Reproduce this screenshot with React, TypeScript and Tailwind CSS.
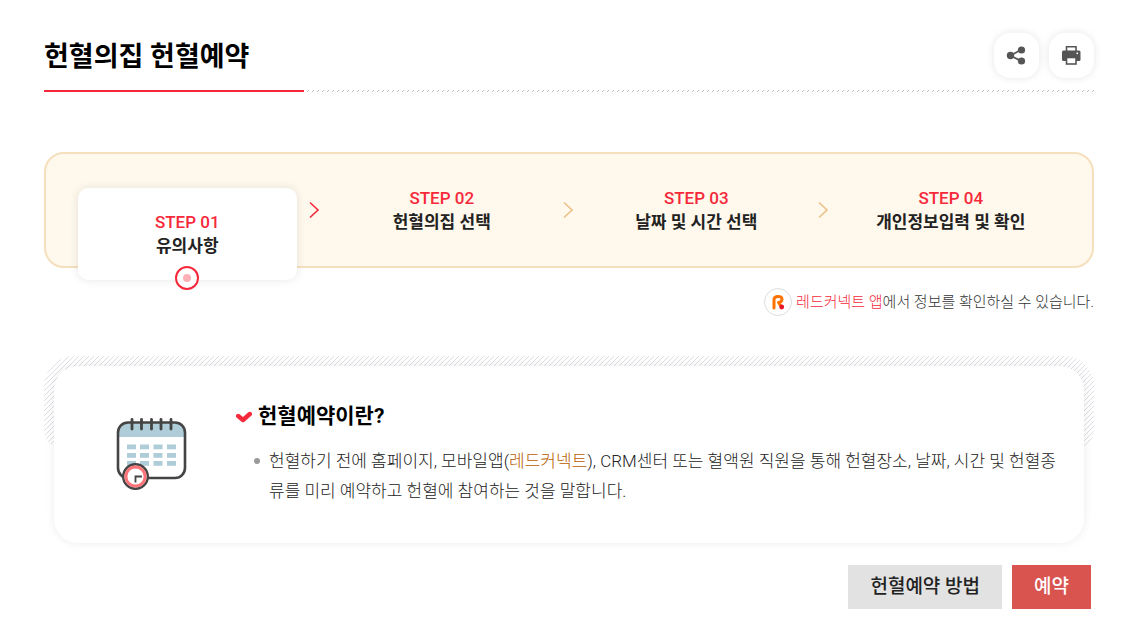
const steps = [
  { no: "STEP 01", label: "유의사항" },
  { no: "STEP 02", label: "헌혈의집 선택" },
  { no: "STEP 03", label: "날짜 및 시간 선택" },
  { no: "STEP 04", label: "개인정보입력 및 확인" },
];

function ShareIcon() {
  return (
    <svg width="21" height="21" viewBox="0 0 21 21" fill="#555" aria-hidden="true">
      <path d="M4.500 10.500 15 4.800M4.500 10.500 15 16" stroke="#555" strokeWidth="1.800" />
      <circle cx="4.500" cy="10.500" r="3.700" />
      <circle cx="15.500" cy="5" r="3.600" />
      <circle cx="15.500" cy="16" r="3.600" />
    </svg>
  );
}

function PrintIcon() {
  return (
    <svg width="21" height="21" viewBox="0 0 21 21" aria-hidden="true">
      <path d="M5.500 6V1.800h9.500V6" fill="#fff" stroke="#555" strokeWidth="1.600" />
      <rect x="1" y="5.500" width="18.500" height="10.500" rx="1.500" fill="#555" />
      <rect x="5.500" y="12.500" width="9.500" height="6.500" fill="#fff" stroke="#555" strokeWidth="1.600" />
      <rect x="15.500" y="7.500" width="1.600" height="1.600" fill="#fff" />
    </svg>
  );
}

function CalendarIcon() {
  const columns = [27, 40, 53.500, 67];
  const rows = [44.500, 53, 61];
  return (
    <svg width="110" height="110" viewBox="0 0 110 110" className="shrink-0" aria-hidden="true">
      <rect x="18" y="22.500" width="67" height="55.500" rx="10" fill="#fff" />
      <path d="M18 37V32.500a10 10 0 0 1 10-10H75a10 10 0 0 1 10 10V37z" fill="#aecdd8" />
      {rows.map((y) =>
        columns.map((x) => <rect key={`${x}-${y}`} x={x} y={y} width="9" height="4.800" fill="#aecdd8" />),
      )}
      <rect x="18" y="22.500" width="67" height="55.500" rx="10" fill="none" stroke="#444" strokeWidth="2.600" />
      {[32, 41.500, 51.500, 61, 71].map((x) => (
        <path key={x} d={`M${x} 19.500v9.500`} stroke="#444" strokeWidth="2.800" strokeLinecap="round" />
      ))}
      <circle cx="35.500" cy="76.500" r="12.300" fill="#fff" stroke="#444" strokeWidth="2.400" />
      <circle cx="35.500" cy="76.500" r="9.600" fill="#fff" stroke="#ff7479" strokeWidth="3" />
      <path d="M35.500 82.500v-6h6.500" fill="none" stroke="#444" strokeWidth="1.800" />
    </svg>
  );
}

function Chevron({ active }: { active: boolean }) {
  return (
    <svg
      width="12"
      height="18"
      viewBox="0 0 12 18"
      fill="none"
      stroke={active ? "#f6293b" : "#eac086"}
      strokeWidth="1.600"
      className="absolute top-[15px] -right-[5px]"
      aria-hidden="true"
    >
      <path d="M2 1.500 10 9 2 16.500" />
    </svg>
  );
}

export default function App() {
  return (
    <main className="bg-white pt-[33px] pr-[33px] pb-6 pl-11 font-['Roboto','Noto_Sans_CJK_KR',sans-serif] text-[#222]">
      <header className="relative flex h-[59px] items-start justify-between">
        <h1 className="text-[27px] leading-[48px] font-bold text-black">헌혈의집 헌혈예약</h1>
        <div className="flex gap-[10px]">
          <button
            type="button"
            aria-label="공유"
            className="flex size-[45px] items-center justify-center rounded-2xl bg-white shadow-[0_0_8px_rgba(0,0,0,0.1)]"
          >
            <ShareIcon />
          </button>
          <button
            type="button"
            aria-label="인쇄"
            className="flex size-[45px] items-center justify-center rounded-2xl bg-white shadow-[0_0_8px_rgba(0,0,0,0.1)]"
          >
            <PrintIcon />
          </button>
        </div>
        <div className="absolute inset-x-0 bottom-0 flex">
          <span className="h-[2px] w-[260px] bg-[#f6293b]" />
          <svg className="h-[2px] flex-1" aria-hidden="true">
            <pattern id="dash" width="5" height="2" patternUnits="userSpaceOnUse">
              <path d="M3 1.500h1M4 0.500h1" stroke="#bbb" />
            </pattern>
            <rect width="100%" height="2" fill="url(#dash)" />
          </svg>
        </div>
      </header>

      <ol className="mt-[60px] grid grid-cols-4 items-start rounded-[20px] border-2 border-[#f5dfbd] bg-[#fff8ec] px-[14px] py-8 text-center text-[17px] leading-6">
        {steps.map((step, index) => (
          <li key={step.no} className="relative">
            {index === 0 ? (
              <div className="relative mx-[18px] mt-[2px] -mb-[46px] rounded-[10px] bg-white py-[22px] shadow-[0_0_10px_rgba(0,0,0,0.1)]">
                <p className="font-medium text-[#f6293b]">{step.no}</p>
                <p className="font-bold">{step.label}</p>
                <span className="absolute -bottom-[10px] left-1/2 flex size-6 -translate-x-1/2 items-center justify-center rounded-full border-2 border-[#f6293b] bg-white">
                  <span className="size-2 rounded-full bg-[#ffb0b6]" />
                </span>
              </div>
            ) : (
              <div>
                <p className="font-medium text-[#f6293b]">{step.no}</p>
                <p className="font-bold">{step.label}</p>
              </div>
            )}
            {index < steps.length - 1 && <Chevron active={index === 0} />}
          </li>
        ))}
      </ol>

      <div className="mt-5 flex items-center justify-end gap-1">
        <span className="flex size-7 items-center justify-center rounded-full border border-[#ddd] bg-white">
          <svg width="14" height="18" viewBox="0 0 14 18" fill="none" aria-hidden="true">
            <path d="M3 15V6.500Q3 3.500 7 3.500T11 6.300Q11 9 7.500 9.500L10.500 14" stroke="#ff7400" strokeWidth="3" strokeLinecap="round" strokeLinejoin="round" />
            <circle cx="10.700" cy="14" r="2.400" fill="#e9122b" />
          </svg>
        </span>
        <p className="text-[15px] leading-6 font-light text-[#333]">
          <a href="#app" className="text-[#f6293b]">레드커넥트 앱</a>에서 정보를 확인하실 수 있습니다.
        </p>
      </div>

      <section className="relative mt-10 p-[10px]">
        <svg className="absolute inset-x-0 top-0 h-[92px] w-full rounded-t-[30px] rounded-b-[18px]" aria-hidden="true">
          <pattern id="hatch" width="5" height="5" patternUnits="userSpaceOnUse">
            <path d="M0 4.500h1M1 3.500h1M2 2.500h1M3 1.500h1M4 0.500h1" stroke="#dcdfe3" />
          </pattern>
          <rect width="100%" height="100%" fill="url(#hatch)" />
        </svg>
        <div className="relative flex items-start rounded-[24px] bg-white pt-[34px] pr-5 pb-[33px] pl-[46px] shadow-[0_0_10px_rgba(0,0,0,0.08)]">
          <CalendarIcon />
          <div className="ml-[26px] min-w-0 flex-1">
            <h2 className="flex items-center gap-[6px] text-[21px] leading-8 font-bold text-black">
              <svg width="16" height="14" viewBox="0 0 16 14" fill="none" aria-hidden="true">
                <path d="M2.200 7 7 11 13.800 5" stroke="#f6293b" strokeWidth="4.400" strokeLinecap="round" strokeLinejoin="round" />
              </svg>
              헌혈예약이란?
            </h2>
            <ul className="mt-[14px] pl-[18px] text-[17px] leading-[30px] font-light text-[#222]">
              <li className="flex gap-[9px]">
                <span className="mt-3 size-[6px] shrink-0 rounded-full bg-[#999]" />
                <p className="break-all">
                  헌혈하기 전에 홈페이지, 모바일앱(<a href="#app" className="text-[#b85c00]">레드커넥트</a>), CRM센터 또는 혈액원 직원을 통해 헌혈장소, 날짜, 시간 및 헌혈종류를 미리 예약하고 헌혈에 참여하는 것을 말합니다.
                </p>
              </li>
            </ul>
          </div>
        </div>
      </section>

      <div className="mt-3 mr-[3px] flex justify-end gap-[10px] text-[19px] leading-6">
        <button type="button" className="h-11 bg-[#e2e2e2] px-[22px] font-medium text-[#222]">헌혈예약 방법</button>
        <button type="button" className="h-11 bg-[#d9534f] px-[22px] font-medium text-white">예약</button>
      </div>
    </main>
  );
}
